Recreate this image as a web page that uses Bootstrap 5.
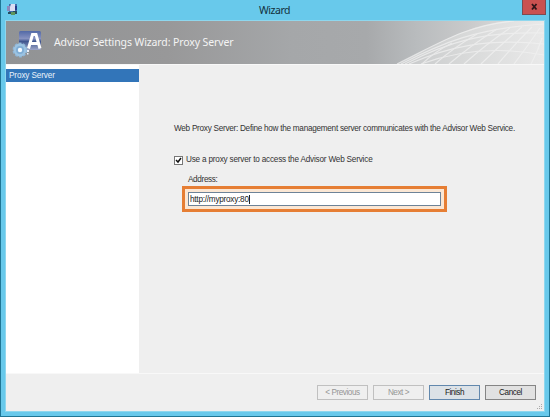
<!DOCTYPE html>
<html lang="en">
<head>
<meta charset="utf-8">
<title>Wizard</title>
<link href="https://cdn.jsdelivr.net/npm/bootstrap@5.3.0/dist/css/bootstrap.min.css" rel="stylesheet">
<style>
html,body{height:100%}
body{margin:0;overflow:hidden;font-family:"Liberation Sans",Arial,sans-serif;font-size:8.2px;line-height:12px;color:#333;letter-spacing:-.2px}
.wizard-window{width:550px;height:417px;background:#68c9eb;border:1px solid #1f7695;border-top:0;padding:0 5px 5px}
.titlebar{height:21px;flex:none}
.app-icon{margin:4px 0 0 1px}
.window-title{font:10.5px/14px "Noto Sans","Open Sans",sans-serif;color:#12303c;letter-spacing:-.45px;margin:3px 0 0 9px}
.close-button{width:24px;height:15px;margin-right:-2px;background:#c95150;border:1px solid #7d4a50;border-top:0;border-radius:0}
.close-button svg{display:block}
.client-area{background:#efefef;min-height:0;box-shadow:0 0 0 1px #8ed7ee}
.banner{height:43px;flex:none;background:linear-gradient(90deg,#919395 0,#989899 30%,#a5a7a9 53%,#a7a9ab 67%,#b8bbbd 76%,#c9cacb 86%,#e7e8e8 100%)}
.banner-logo{margin-left:6px}
.banner-art{right:0;top:0}
.banner-title{font:10.5px/15px "Noto Sans","Open Sans",sans-serif;color:#f4f4f4;letter-spacing:-.11px;margin-left:12px}
.wizard-body{height:309px;flex:none;border-top:1px solid #f8f8f8}
.steps{width:133px;flex:none;background:#fff;padding-top:4px}
.step-active{height:13px;background:#3275b9;color:#e9f2fa;padding-left:3px;line-height:13px;letter-spacing:-.12px}
.settings{padding:58px 0 0 35px}
.intro{letter-spacing:-.27px}
.proxy-option{margin-top:19px;height:12px;gap:3px;letter-spacing:-.2px}
.check-box{width:9px;height:9px;border:1px solid #777;background:#fff}
.address-label{margin:8px 0 0 14px;letter-spacing:-.35px}
.address-highlight{margin:0 0 0 8px;width:265px;height:26px;border:3px solid #e67e34;padding:3px;background:#fbe7d4}
.address-field{height:14px;border:1px solid #6d8398;border-radius:0;background:#fff;padding:1px 0 0 1px;font-size:8.2px;line-height:12px;color:#222;letter-spacing:-.24px}
.caret{width:1px;height:9px;background:#222}
.wizard-footer{border-top:1px solid #f8f8f8;padding:11px 8px 0 0;gap:5px}
.wizard-footer .btn{width:51px;height:15px;padding:0;border-radius:0;font-size:8.2px;line-height:13px;letter-spacing:-.45px;color:#222;background:#e1e1e1;border:1px solid #858585}
.wizard-footer .btn:disabled{color:#969696;background:#efefef;border-color:#c0c0c0;opacity:1}
.wizard-footer .btn-finish{border-color:#6288ad;background:#dce2e7}
.size-grip{right:1px;bottom:1px}
</style>
<script src="https://cdn.jsdelivr.net/npm/bootstrap@5.3.0/dist/js/bootstrap.bundle.min.js"></script>
</head>
<body>
<main class="wizard-window d-flex flex-column">
<header class="titlebar d-flex justify-content-between align-items-start">
<svg class="app-icon" width="11" height="12" viewBox="0 0 11 12"><path fill="#426dab" d="M2 0h8v8H2z"/><path fill="#dcdef3" d="M4 0h4v7H3V3z"/><path fill="#8d89bd" d="M0 2h3v5H0z"/><path fill="#264c5f" d="M1 8h4v2H1zm5-1h4v3H6z"/><path fill="#5e965b" d="M4 8h4v3H4z"/><path fill="#233b89" d="M8 2h2v4H8z"/></svg>
<span class="window-title">Wizard</span>
<button class="close-button btn p-0" type="button" aria-label="Close"><svg width="22" height="14" viewBox="0 0 22 14"><path d="m9 4 4.500 5.500m0-5.500L9 9.500" stroke="#2d1519" stroke-width="1.800"/></svg></button>
</header>
<section class="client-area flex-grow-1 d-flex flex-column position-relative">
<div class="banner d-flex align-items-center position-relative">
<svg class="banner-logo" width="30" height="30" viewBox="0 0 30 30">
<defs><linearGradient id="tile" x2="0" y2="1"><stop stop-color="#5269a7"/><stop offset=".4" stop-color="#8792c0"/><stop offset=".55" stop-color="#3f568f"/><stop offset="1" stop-color="#9da6c8"/></linearGradient></defs>
<rect x="7" y="3" width="22" height="19" rx="1.5" fill="url(#tile)"/>
<path d="m16.500 20.500 4-14h3.500l4 14m-10-5h8" fill="none" stroke="#fff" stroke-width="3"/>
<circle cx="8" cy="22" r="6.700" fill="none" stroke="#8fb5d5" stroke-width="1.500" stroke-dasharray="3 1.270"/><circle cx="8" cy="22" r="6.500" fill="#9bc3e2"/><circle cx="8" cy="22" r="4" fill="#7fadd5"/><circle cx="8" cy="22" r="2.200" fill="#f3faff"/>
<path d="M15 22h2v2h-2zm0 3h1.500v1.500H15z" fill="#e8eef9"/>
</svg>
<span class="banner-title">Advisor Settings Wizard: Proxy Server</span>
<svg class="banner-art position-absolute" width="150" height="43" viewBox="0 0 150 43">
<defs><linearGradient id="wave"><stop stop-color="#c6c8c9"/><stop offset=".5" stop-color="#d9dada"/><stop offset="1" stop-color="#e9e9e9"/></linearGradient></defs>
<path d="M3 43C38 27 68 5 112 0h38v43z" fill="url(#wave)"/>
<g fill="none" stroke="#f1f1f1" stroke-width="1.200" opacity=".75"><path d="M3 43C42 24 72 4 120 0M7 43C48 22 83 7 150 3M11 43C52 22 88 10 150 12M15 43C54 26 92 17 150 23M27 43C62 30 102 25 150 34"/><path d="M28 43Q40 31 58 22M41 43Q59 27 83 13M55 43Q76 25 103 8M70 43Q91 24 116 7M87 43Q105 25 128 6M104 43Q119 25 138 6M120 43Q133 26 146 7M137 43Q144 30 148 17"/></g>
</svg>
</div>
<div class="wizard-body d-flex">
<nav class="steps"><div class="step-active">Proxy Server</div></nav>
<div class="settings flex-grow-1">
<div class="intro text-nowrap"><span>Web Proxy Server: Define how the management server communicates with the Advisor Web Service.</span></div>
<label class="proxy-option d-flex align-items-center"><svg class="check-box" viewBox="0 0 7 7"><path d="m1 3 2 2 3-4" fill="none" stroke="#111" stroke-width="1.500"/></svg><span>Use a proxy server to access the Advisor Web Service</span></label>
<div class="address-label">Address:</div>
<div class="address-highlight"><div class="address-field form-control d-flex align-items-center"><span>http://myproxy:80</span><i class="caret"></i></div></div>
</div>
</div>
<footer class="wizard-footer flex-grow-1 d-flex align-items-start justify-content-end">
<button class="btn" disabled>&lt; Previous</button><button class="btn" disabled>Next &gt;</button><button class="btn btn-finish">Finish</button><button class="btn">Cancel</button>
<svg class="size-grip position-absolute" width="6" height="6" viewBox="0 0 6 6"><path d="M4 0h1v1H4zM2 2h1v1H2zm2 0h1v1H4zM0 4h1v1H0zm2 0h1v1H2zm2 0h1v1H4z" fill="#aaa"/></svg>
</footer>
</section>
</main>
</body>
</html>
